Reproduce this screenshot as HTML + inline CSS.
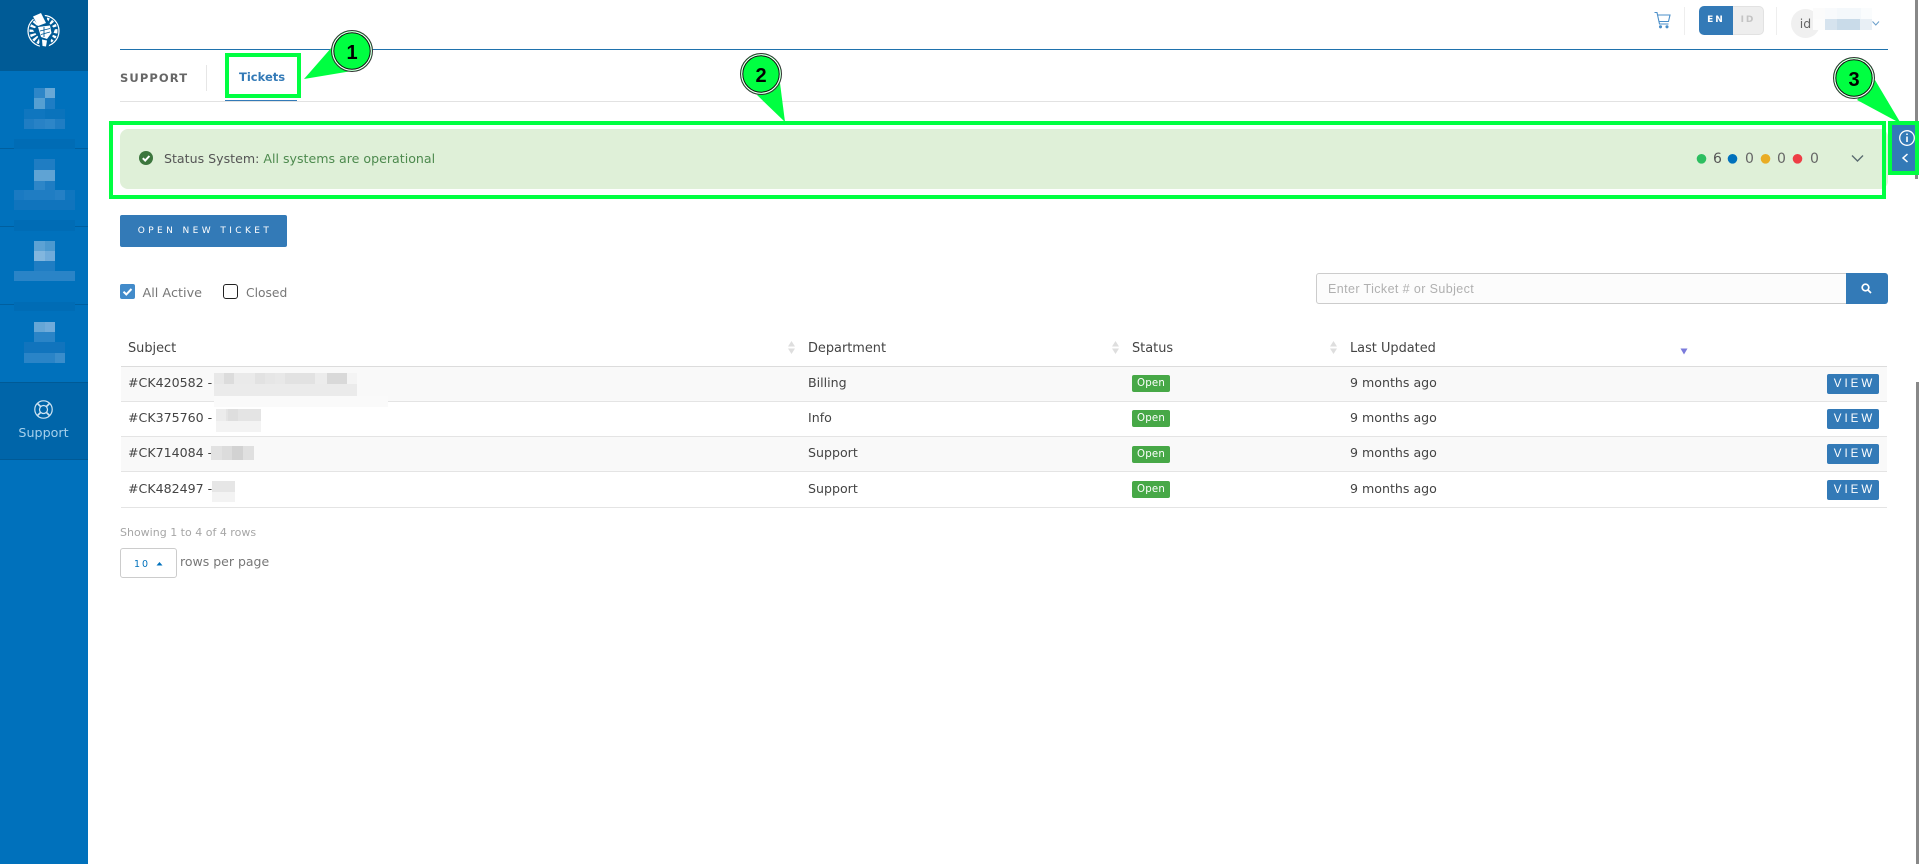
<!DOCTYPE html>
<html lang="en"><head><meta charset="utf-8"><title>Support Tickets</title>
<style>
html,body{margin:0;padding:0;width:1919px;height:864px;overflow:hidden;background:#fff}
body{position:relative;font-family:"DejaVu Sans","Liberation Sans",sans-serif;font-size:12.6px;color:#444}
.a{position:absolute}
.t{position:absolute;white-space:nowrap;line-height:20px}
.h{font-size:12.9px}
.row{position:absolute;left:121px;width:1766px;height:34px;border-bottom:1px solid #e4e4e4}
.odd{background:#f9f9f9}
.badge{position:absolute;left:1132px;width:38px;height:17px;background:#47a847;border-radius:2px;color:#fff;font-size:10.2px;line-height:17px;text-align:center;letter-spacing:.2px}
.view{position:absolute;left:1827px;width:52px;height:20px;background:#337ab7;border-radius:2px;color:#fff;font-family:"Liberation Sans",sans-serif;font-size:11.5px;line-height:20px;text-align:center;letter-spacing:3px;text-indent:3px}
.sort{position:absolute;width:7px;height:13px}
svg{position:absolute;overflow:visible}
</style></head><body>

<div class="a" style="left:0;top:0;width:88px;height:864px;background:#0071bc"></div>
<div class="a" style="left:0;top:0;width:88px;height:71px;background:#005b96"></div>
<div class="a" style="left:0;top:382px;width:88px;height:78px;background:#0065a9;border-top:1px solid #005a96;border-bottom:1px solid #005a96;box-sizing:border-box"></div>

<svg style="left:0;top:0" width="88" height="380" shape-rendering="crispEdges">
<g fill="#005f9f"><rect y="148" width="14" height="1"/><rect x="75" y="148" width="13" height="1"/><rect y="226" width="14" height="1"/><rect x="75" y="226" width="13" height="1"/><rect y="304" width="14" height="1"/><rect x="75" y="304" width="13" height="1"/></g>
<rect x="34" y="88" width="11" height="10" fill="#2d86c8"/><rect x="45" y="88" width="10" height="10" fill="#68a8d6"/>
<rect x="34" y="98" width="11" height="11" fill="#559fd2"/><rect x="45" y="98" width="10" height="11" fill="#1e7dc4"/>
<rect x="24" y="109" width="21" height="10" fill="#0f76bf"/><rect x="45" y="109" width="20" height="10" fill="#0a73bc"/>
<rect x="24" y="119" width="10" height="10" fill="#1f7dc3"/><rect x="34" y="119" width="11" height="10" fill="#2882c6"/><rect x="45" y="119" width="10" height="10" fill="#2d86c8"/><rect x="55" y="119" width="10" height="10" fill="#1f7dc3"/>
<rect x="14" y="139" width="61" height="10" fill="#006cb5"/>
<rect x="34" y="159" width="21" height="11" fill="#1f7dc3"/><rect x="34" y="170" width="21" height="11" fill="#5fa3d4"/>
<rect x="34" y="181" width="11" height="9" fill="#2d86c8"/><rect x="45" y="181" width="10" height="9" fill="#1f7dc3"/>
<rect x="14" y="190" width="10" height="10" fill="#1a7ac2"/><rect x="24" y="190" width="31" height="10" fill="#1f7dc3"/><rect x="55" y="190" width="10" height="10" fill="#2580c5"/><rect x="65" y="190" width="10" height="10" fill="#0f76bf"/>
<rect x="14" y="200" width="61" height="10" fill="#1074bd"/>
<rect x="14" y="220" width="61" height="11" fill="#006cb5"/>
<rect x="34" y="241" width="11" height="10" fill="#5ca2d4"/><rect x="45" y="241" width="10" height="10" fill="#4c99cf"/>
<rect x="34" y="251" width="11" height="10" fill="#82b6de"/><rect x="45" y="251" width="10" height="10" fill="#70abda"/>
<rect x="34" y="261" width="21" height="10" fill="#1f7dc3"/>
<rect x="14" y="271" width="61" height="10" fill="#2a84c7"/>
<rect x="14" y="302" width="61" height="9" fill="#006cb5"/>
<rect x="34" y="322" width="11" height="10" fill="#65a6d6"/><rect x="45" y="322" width="10" height="10" fill="#70abda"/>
<rect x="34" y="332" width="21" height="10" fill="#2a84c7"/>
<rect x="24" y="342" width="41" height="11" fill="#1174bd"/>
<rect x="24" y="353" width="31" height="10" fill="#2a84c7"/><rect x="55" y="353" width="10" height="10" fill="#3a8dcb"/>
</svg>

<svg style="left:0;top:0" width="88" height="71">
<circle cx="43.5" cy="31" r="15.5" fill="none" stroke="#fff" stroke-width="1.2"/>
<circle cx="43.5" cy="31" r="10.5" fill="none" stroke="#fff" stroke-width="7" stroke-dasharray="2 2"/>
<path d="M31 16 42 11 50 24 55 29 51 40 48 48 40 47 39 38 33 30 38 25Z" fill="#005b96"/>
<path d="M33 16.500 41 13 46 23 38 26Z" fill="#fff"/>
<path d="M38 27 50 25.500 51.500 33 47 39 41 37Z" fill="#fff"/>
<path d="M42 39.500 47 40.500 46 46.500 42.500 46Z" fill="#fff"/>
<path d="M40 31 50 28.500M41 34.500 50 32M44 27V37" stroke="#005b96" stroke-width=".9"/>
</svg>

<svg style="left:0;top:0" width="88" height="460" fill="none" stroke="#cfe4f3" stroke-width="1.2">
<circle cx="43.5" cy="409.5" r="8.7"/><circle cx="43.5" cy="409.5" r="4"/>
<path d="M37.5 403.5 40.7 406.7M49.5 403.5 46.3 406.7M37.5 415.5 40.7 412.300M49.5 415.5 46.300 412.300" stroke-width="1.700"/>
</svg>
<div class="t" style="left:0;width:87px;text-align:center;top:423px;color:#a6d0ec;font-size:12.7px">Support</div>

<!-- top right -->
<svg style="left:1654px;top:12px" width="18" height="18" fill="none" stroke="#4b8fc9" stroke-width="1.100">
<path d="M0.500 .5H3L5.500 12H14.500"/><path d="M3.500 3H16L14.500 9.500H5"/>
<circle cx="6.500" cy="14.800" r="1" fill="#4b8fc9"/><circle cx="13" cy="14.800" r="1" fill="#4b8fc9"/></svg>
<div class="a" style="left:1684px;top:7px;width:1px;height:28px;background:#eee"></div>
<div class="a" style="left:1699px;top:6px;width:34px;height:29px;background:#337ab7;border-radius:5px 0 0 5px;color:#fff;font:bold 9px/29px 'DejaVu Sans',sans-serif;text-align:center;letter-spacing:2px">EN</div>
<div class="a" style="left:1733px;top:6px;width:31px;height:29px;box-sizing:border-box;background:#eee;border:1px solid #e2e2e2;border-left:0;border-radius:0 5px 5px 0;color:#c4c4c4;font:bold 9px/27px 'DejaVu Sans',sans-serif;text-align:center;letter-spacing:2px">ID</div>
<div class="a" style="left:1776px;top:7px;width:1px;height:28px;background:#eee"></div>
<div class="a" style="left:1791px;top:9px;width:29px;height:29px;border-radius:50%;background:#f0f0f0;color:#666;font-size:12.500px;line-height:29px;text-align:center">id</div>
<svg style="left:1813px;top:8px" width="59" height="22" shape-rendering="crispEdges">
<rect width="12" height="11" fill="#fbfbfb"/><rect x="12" width="12" height="11" fill="#f8fafc"/><rect x="24" width="24" height="11" fill="#f4f8fb"/><rect x="48" width="11" height="11" fill="#fafcfd"/>
<rect y="11" width="12" height="11" fill="#fcfcfc"/><rect x="12" y="11" width="12" height="11" fill="#d6e3ee"/><rect x="24" y="11" width="23" height="11" fill="#c9dbe9"/><rect x="47" y="11" width="12" height="11" fill="#e8eff5"/></svg>
<svg style="left:1872px;top:21px" width="8" height="6" fill="none" stroke="#6a9fcb" stroke-width="1"><path d="M.5 .5 3.800 4 7 .5"/></svg>

<!-- header -->
<div class="a" style="left:120px;top:49px;width:1768px;height:1px;background:#1f72ad"></div>
<div class="t" style="left:120px;top:68px;font:bold 11.500px/20px 'DejaVu Sans',sans-serif;color:#666;letter-spacing:1.100px">SUPPORT</div>
<div class="a" style="left:206px;top:65px;width:1px;height:26px;background:#e6e6e6"></div>
<div class="t" style="left:239px;top:67px;font:bold 11.500px/20px 'DejaVu Sans',sans-serif;color:#337ab7">Tickets</div>
<div class="a" style="left:120px;top:101px;width:1768px;height:1px;background:#e2e2e2"></div>
<div class="a" style="left:225px;top:100px;width:72px;height:1px;background:#337ab7"></div>

<!-- alert -->
<div class="a" style="left:120px;top:129px;width:1768px;height:60px;background:#dff0d8;border-radius:8px"></div>
<svg style="left:139px;top:151px" width="14" height="14"><circle cx="7" cy="7" r="7" fill="#3c763d"/><path d="M3.800 7.200 6.200 9.600 10.400 5" fill="none" stroke="#fff" stroke-width="2"/></svg>
<div class="t" style="left:164px;top:149px;color:#555;font-size:12.6px">Status System: <span style="color:#4d8a4e">All systems are operational</span></div>
<svg style="left:1690px;top:150px" width="180" height="16">
<circle cx="11.500" cy="8.800" r="4.800" fill="#2dbe60"/><circle cx="42.500" cy="8.800" r="4.800" fill="#0071bc"/><circle cx="75.500" cy="8.800" r="4.800" fill="#e9ac24"/><circle cx="107.500" cy="8.800" r="4.800" fill="#ee3e46"/>
<path d="M162 5.500 167.500 11 173 5.500" fill="none" stroke="#5a6b70" stroke-width="1.400"/></svg>
<div class="t" style="left:1713px;top:149px;color:#555;font-size:14px">6</div>
<div class="t" style="left:1745px;top:149px;color:#666;font-size:14px">0</div>
<div class="t" style="left:1777px;top:149px;color:#666;font-size:14px">0</div>
<div class="t" style="left:1810px;top:149px;color:#666;font-size:14px">0</div>

<!-- button -->
<div class="a" style="left:120px;top:215px;width:167px;height:32px;background:#337ab7;border-radius:2px;color:#fff;font-size:9px;line-height:33px;text-align:center;letter-spacing:3.400px;text-indent:3px">OPEN NEW TICKET</div>

<!-- filters -->
<div class="a" style="left:120px;top:284px;width:15px;height:15px;background:#428bca;border-radius:2px"></div>
<svg style="left:120px;top:284px" width="15" height="15"><path d="M3.500 7.700 6.300 10.400 11.500 5" fill="none" stroke="#fff" stroke-width="2"/></svg>
<div class="t" style="left:142.500px;top:284px;color:#777;font-size:12.800px">All Active</div>
<div class="a" style="left:223px;top:284px;width:15px;height:15px;box-sizing:border-box;border:1.500px solid #222;border-radius:3px;background:#fff"></div>
<div class="t" style="left:246px;top:283px;color:#777;font-size:12.300px">Closed</div>

<!-- search -->
<div class="a" style="left:1316px;top:273px;width:532px;height:31px;box-sizing:border-box;background:#fcfcfc;border:1px solid #ccc;border-radius:3px 0 0 3px"></div>
<div class="t" style="left:1328px;top:279px;color:#b0b0b0;font-family:'Liberation Sans',sans-serif;font-size:12.500px;letter-spacing:.4px">Enter Ticket # or Subject</div>
<div class="a" style="left:1846px;top:273px;width:42px;height:31px;background:#337ab7;border-radius:0 3px 3px 0"></div>
<svg style="left:1861px;top:283px" width="11" height="11" fill="none" stroke="#fff" stroke-width="1.700"><circle cx="4.500" cy="4.500" r="3.300"/><path d="M7 7 10 10"/></svg>

<!-- table -->
<div class="t h" style="left:128px;top:339px;color:#444">Subject</div>
<div class="t h" style="left:808px;top:339px;color:#444">Department</div>
<div class="t h" style="left:1132px;top:339px;color:#444">Status</div>
<div class="t h" style="left:1350px;top:339px;color:#444">Last Updated</div>
<svg class="sort" style="left:788px;top:341px" width="7" height="13"><path d="M3.500 0 7 5.500H0Z M0 7.500H7L3.500 13Z" fill="#dedede"/></svg>
<svg class="sort" style="left:1112px;top:341px" width="7" height="13"><path d="M3.500 0 7 5.500H0Z M0 7.500H7L3.500 13Z" fill="#dedede"/></svg>
<svg class="sort" style="left:1330px;top:341px" width="7" height="13"><path d="M3.500 0 7 5.500H0Z M0 7.500H7L3.500 13Z" fill="#dedede"/></svg>
<svg style="left:1680px;top:348px" width="8" height="7"><path d="M.5 .5H7.500L4 6.500Z" fill="#7b7bdb"/></svg>

<div class="a" style="left:121px;top:366px;width:1766px;height:1px;background:#dcdcdc"></div>
<div class="row odd" style="top:367px"></div>
<div class="row" style="top:402px"></div>
<div class="row odd" style="top:437px"></div>
<div class="row" style="top:472px;height:35px"></div>

<div class="t" style="left:128px;top:373px">#CK420582 -</div>
<div class="t" style="left:128px;top:408px">#CK375760 - a</div>
<div class="t" style="left:128px;top:443px">#CK714084 -</div>
<div class="t" style="left:128px;top:479px">#CK482497 -</div>

<svg style="left:211px;top:373px" width="180" height="130" shape-rendering="crispEdges">
<g transform="translate(-211 -373)">
<rect x="214" y="373" width="143" height="23" fill="#ebebeb"/>
<rect x="214" y="373" width="10" height="11" fill="#e8e8e8"/><rect x="224" y="373" width="10" height="11" fill="#dcdcdc"/><rect x="234" y="373" width="21" height="11" fill="#eaeaea"/><rect x="255" y="373" width="10" height="11" fill="#e2e2e2"/><rect x="265" y="373" width="10" height="11" fill="#e6e6e6"/><rect x="275" y="373" width="10" height="11" fill="#e8e8e8"/><rect x="285" y="373" width="30" height="11" fill="#e2e2e2"/><rect x="315" y="373" width="12" height="11" fill="#ececec"/><rect x="327" y="373" width="20" height="11" fill="#d9d9d9"/><rect x="347" y="373" width="10" height="11" fill="#f4f4f4"/>
<rect x="214" y="396" width="174" height="11" fill="#fafafa"/>
<rect x="216" y="409" width="45" height="12" fill="#e4e4e4"/><rect x="228" y="409" width="10" height="12" fill="#dedede"/><rect x="216" y="409" width="10" height="12" fill="#ececec"/>
<rect x="216" y="421" width="45" height="11" fill="#f3f3f3"/>
<rect x="211" y="446" width="11" height="14" fill="#e2e2e2"/><rect x="222" y="446" width="10" height="14" fill="#dcdcdc"/><rect x="232" y="446" width="11" height="14" fill="#d2d2d2"/><rect x="243" y="446" width="11" height="14" fill="#e0e0e0"/>
<rect x="212" y="481" width="23" height="11" fill="#e6e6e6"/><rect x="212" y="492" width="23" height="10" fill="#f3f3f3"/>
</g></svg>

<div class="t" style="left:808px;top:373px">Billing</div>
<div class="t" style="left:808px;top:408px">Info</div>
<div class="t" style="left:808px;top:443px">Support</div>
<div class="t" style="left:808px;top:479px">Support</div>

<div class="badge" style="top:375px">Open</div>
<div class="badge" style="top:410px">Open</div>
<div class="badge" style="top:446px">Open</div>
<div class="badge" style="top:481px">Open</div>

<div class="t" style="left:1350px;top:373px">9 months ago</div>
<div class="t" style="left:1350px;top:408px">9 months ago</div>
<div class="t" style="left:1350px;top:443px">9 months ago</div>
<div class="t" style="left:1350px;top:479px">9 months ago</div>

<div class="view" style="top:374px">VIEW</div>
<div class="view" style="top:409px">VIEW</div>
<div class="view" style="top:444px">VIEW</div>
<div class="view" style="top:480px">VIEW</div>

<!-- footer -->
<div class="t" style="left:120px;top:523px;color:#a6a6a6;font-size:11px">Showing 1 to 4 of 4 rows</div>
<div class="a" style="left:120px;top:548px;width:57px;height:30px;box-sizing:border-box;border:1px solid #ccc;border-radius:3px;background:#fff"></div>
<div class="t" style="left:134px;top:555px;color:#0071bc;font-size:9.500px;letter-spacing:2px">10</div>
<svg style="left:156px;top:562px" width="7" height="4"><path d="M3.500 0 6.500 3.500H.5Z" fill="#0071bc"/></svg>
<div class="t" style="left:180px;top:552px;color:#777;font-size:12.500px">rows per page</div>

<!-- scrollbar -->
<div class="a" style="left:1915px;top:0;width:3px;height:179px;background:#888"></div>
<div class="a" style="left:1916px;top:382px;width:3px;height:482px;background:#888"></div>

<!-- side tab -->
<div class="a" style="left:1892px;top:125px;width:24px;height:46px;background:#337ab7"></div>
<svg style="left:1892px;top:125px" width="24" height="46" fill="none" stroke="#fff"><circle cx="15" cy="13" r="7.300" stroke-width="1.300"/><path d="M15 11.500V17" stroke-width="1.600"/><path d="M15 8.500V10" stroke-width="1.600"/><path d="M16.500 29.500 12 33.500 16.500 37.500" stroke-width="1.500" transform="translate(-1 -.5)"/></svg>

<!-- annotations -->
<svg style="left:0;top:0" width="1919" height="864">
<g fill="none" stroke="#00ff41" stroke-width="4">
<rect x="227" y="55" width="72" height="41"/>
<rect x="111" y="123" width="1773" height="74"/>
<rect x="1890" y="123" width="27" height="50"/>
</g>
<g fill="#00ff41">
<path d="M304 79 332 47 352 71Z"/>
<path d="M757 95 785 122 780 83Z"/>
<path d="M1875 80 1900 122 1896 121 1857 100Z"/>
</g>
<g>
<circle cx="352" cy="51" r="20.500" fill="#00ff41" stroke="#333" stroke-width="1"/>
<circle cx="352" cy="51" r="19.200" fill="none" stroke="#fff" stroke-width="1.200"/>
<circle cx="352" cy="51" r="18.200" fill="none" stroke="#111" stroke-width="1"/>
<circle cx="761" cy="74" r="20.500" fill="#00ff41" stroke="#333" stroke-width="1"/>
<circle cx="761" cy="74" r="19.200" fill="none" stroke="#fff" stroke-width="1.200"/>
<circle cx="761" cy="74" r="18.200" fill="none" stroke="#111" stroke-width="1"/>
<circle cx="1854" cy="78" r="20.500" fill="#00ff41" stroke="#333" stroke-width="1"/>
<circle cx="1854" cy="78" r="19.200" fill="none" stroke="#fff" stroke-width="1.200"/>
<circle cx="1854" cy="78" r="18.200" fill="none" stroke="#111" stroke-width="1"/>
</g>
<g font-family="'Liberation Sans',sans-serif" font-weight="bold" font-size="20" text-anchor="middle" fill="#000">
<text x="352" y="59">1</text><text x="761" y="82">2</text><text x="1854" y="86">3</text>
</g>
</svg>
</body></html>
